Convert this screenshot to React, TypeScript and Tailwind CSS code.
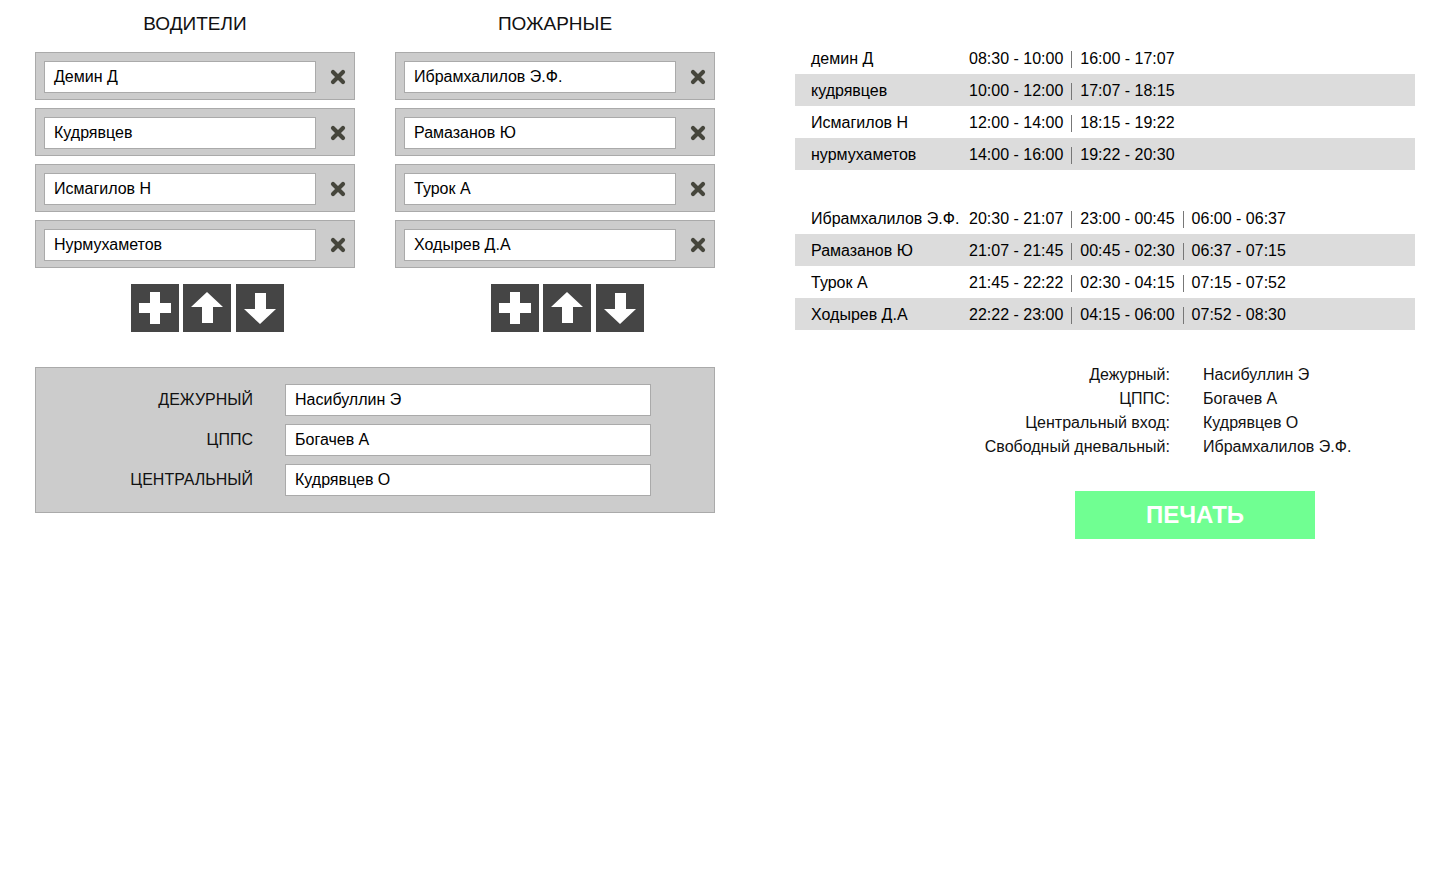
import React from "react";

const font = { fontFamily: '"Liberation Sans", Arial, sans-serif' };

function XIcon() {
  return (
    <svg width="16" height="16" viewBox="0 0 16 16" className="shrink-0">
      <path
        d="M3 3 L13 13 M13 3 L3 13"
        stroke="#46463c"
        strokeWidth="4.2"
        strokeLinecap="round"
      />
    </svg>
  );
}

function PlusIcon() {
  return (
    <svg width="48" height="48" viewBox="0 0 48 48">
      <path d="M19 8 H29 V19 H40 V29 H29 V40 H19 V29 H8 V19 H19 Z" fill="#fff" />
    </svg>
  );
}

function UpIcon() {
  return (
    <svg width="48" height="48" viewBox="0 0 48 48">
      <path d="M24 8 L40 23 L30 23 L30 39 L19 39 L19 23 L8 23 Z" fill="#fff" />
    </svg>
  );
}

function DownIcon() {
  return (
    <svg width="48" height="48" viewBox="0 0 48 48">
      <path d="M24 40 L40 25 L30 25 L30 9 L19 9 L19 25 L8 25 Z" fill="#fff" />
    </svg>
  );
}

function NameRow({ name }: { name: string }) {
  return (
    <div className="flex h-[48px] items-start border border-[#aaaaaa] bg-[#cccccc] pl-[8px] pt-[8px]">
      <div className="flex h-[32px] w-[272px] items-center border border-[#aaaaaa] bg-white pl-[9px] text-[16px] text-black">
        {name}
      </div>
      <div className="ml-[14px] flex h-[32px] items-center">
        <XIcon />
      </div>
    </div>
  );
}

function Column({ title, names }: { title: string; names: string[] }) {
  return (
    <div className="flex w-[320px] flex-col">
      <div className="flex h-[46px] items-center justify-center pt-[2px] text-[19px] text-[#111]">
        {title}
      </div>
      <div className="mt-[6px] flex flex-col gap-[8px]">
        {names.map((n) => (
          <NameRow key={n} name={n} />
        ))}
      </div>
      <div className="mt-[16px] flex gap-[4px] pl-[96px]">
        <div className="h-[48px] w-[48px] bg-[#454545]">
          <PlusIcon />
        </div>
        <div className="h-[48px] w-[48px] bg-[#454545]">
          <UpIcon />
        </div>
        <div className="ml-[1px] h-[48px] w-[48px] bg-[#454545]">
          <DownIcon />
        </div>
      </div>
    </div>
  );
}

function Sep() {
  return <span className="mx-[8px] inline-block h-[17px] w-px bg-[#777]" />;
}

function TimeRow({
  name,
  times,
  shaded,
}: {
  name: string;
  times: string[];
  shaded: boolean;
}) {
  return (
    <div
      className={`flex h-[32px] items-center pt-[2px] text-[16px] text-black ${
        shaded ? "bg-[#dcdcdc]" : ""
      }`}
    >
      <div className="w-[174px] pl-[16px] whitespace-nowrap">{name}</div>
      <div className="flex items-center whitespace-nowrap">
        {times.map((t, i) => (
          <React.Fragment key={i}>
            {i > 0 && <Sep />}
            <span>{t}</span>
          </React.Fragment>
        ))}
      </div>
    </div>
  );
}

export default function App() {
  const drivers = ["Демин Д", "Кудрявцев", "Исмагилов Н", "Нурмухаметов"];
  const firemen = ["Ибрамхалилов Э.Ф.", "Рамазанов Ю", "Турок А", "Ходырев Д.А"];

  const t1 = [
    ["демин Д", ["08:30 - 10:00", "16:00 - 17:07"]],
    ["кудрявцев", ["10:00 - 12:00", "17:07 - 18:15"]],
    ["Исмагилов Н", ["12:00 - 14:00", "18:15 - 19:22"]],
    ["нурмухаметов", ["14:00 - 16:00", "19:22 - 20:30"]],
  ] as [string, string[]][];
  const t2 = [
    ["Ибрамхалилов Э.Ф.", ["20:30 - 21:07", "23:00 - 00:45", "06:00 - 06:37"]],
    ["Рамазанов Ю", ["21:07 - 21:45", "00:45 - 02:30", "06:37 - 07:15"]],
    ["Турок А", ["21:45 - 22:22", "02:30 - 04:15", "07:15 - 07:52"]],
    ["Ходырев Д.А", ["22:22 - 23:00", "04:15 - 06:00", "07:52 - 08:30"]],
  ] as [string, string[]][];

  const duty = [
    ["ДЕЖУРНЫЙ", "Насибуллин Э"],
    ["ЦППС", "Богачев А"],
    ["ЦЕНТРАЛЬНЫЙ", "Кудрявцев О"],
  ];

  const info = [
    ["Дежурный:", "Насибуллин Э"],
    ["ЦППС:", "Богачев А"],
    ["Центральный вход:", "Кудрявцев О"],
    ["Свободный дневальный:", "Ибрамхалилов Э.Ф."],
  ];

  return (
    <div className="min-h-[877px] w-[1440px] bg-white text-black" style={font}>
      <div className="flex pl-[35px]">
        {/* Left side */}
        <div className="flex w-[680px] flex-col">
          <div className="flex gap-[40px]">
            <Column title="ВОДИТЕЛИ" names={drivers} />
            <Column title="ПОЖАРНЫЕ" names={firemen} />
          </div>
          <div className="mt-[35px] flex flex-col gap-[8px] border border-[#aaaaaa] bg-[#cccccc] py-[16px]">
            {duty.map(([l, v]) => (
              <div key={l} className="flex h-[32px] items-center">
                <div className="w-[217px] text-right text-[16px] text-[#111]">
                  {l}
                </div>
                <div className="ml-[32px] flex h-[32px] w-[366px] items-center border border-[#aaaaaa] bg-white pl-[9px] text-[16px]">
                  {v}
                </div>
              </div>
            ))}
          </div>
        </div>

        {/* Right side */}
        <div className="ml-[80px] flex w-[620px] flex-col pt-[42px]">
          <div className="flex flex-col">
            {t1.map(([n, t], i) => (
              <TimeRow key={n} name={n} times={t} shaded={i % 2 === 1} />
            ))}
          </div>
          <div className="mt-[32px] flex flex-col">
            {t2.map(([n, t], i) => (
              <TimeRow key={n} name={n} times={t} shaded={i % 2 === 1} />
            ))}
          </div>
          <div className="mt-[33px] flex flex-col text-[16px] text-[#111]">
            {info.map(([l, v]) => (
              <div key={l} className="flex h-[24px] items-center">
                <div className="w-[375px] text-right">{l}</div>
                <div className="ml-[33px]">{v}</div>
              </div>
            ))}
          </div>
          <div className="ml-[280px] mt-[32px] flex h-[48px] w-[240px] items-center justify-center bg-[#70ff92] text-[24px] font-bold text-white">
            ПЕЧАТЬ
          </div>
        </div>
      </div>
    </div>
  );
}
